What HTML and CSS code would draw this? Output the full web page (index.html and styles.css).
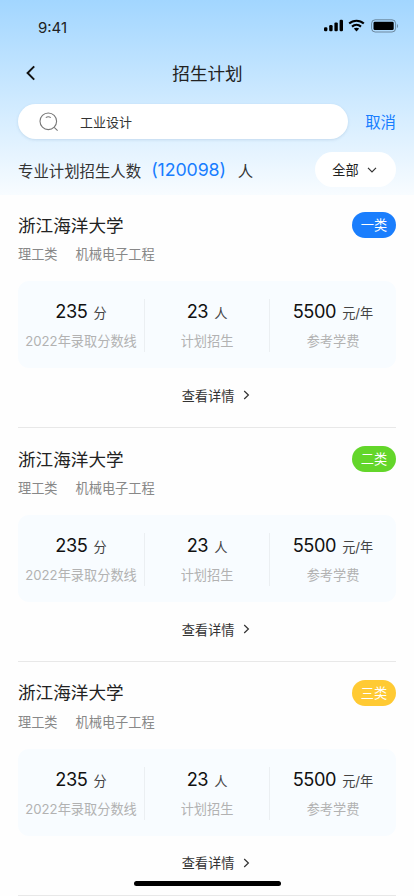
FILE: index.html
```html
<!DOCTYPE html>
<html lang="zh-CN">
<head>
  <meta charset="UTF-8">
  <meta name="viewport" content="width=device-width, initial-scale=1.0">
  <title>招生计划</title>
  <link rel="stylesheet" href="styles.css">
</head>
<body>

<div class="top">
  <!-- 状态栏 -->
  <div class="status">
    <span class="time">9:41</span>
    <div class="status-icons">
      <svg width="20" height="14" viewBox="0 0 20 14">
        <rect x="0" y="8.2" width="3.4" height="4" rx="1.2"/>
        <rect x="5.2" y="6" width="3.4" height="6.2" rx="1.2"/>
        <rect x="10.4" y="3.4" width="3.4" height="8.8" rx="1.2"/>
        <rect x="15.6" y="0.8" width="3.4" height="11.4" rx="1.2"/>
      </svg>
      <svg class="wifi" width="17" height="14" viewBox="0 0 17 14">
        <path d="M1.2 4.6C5.2.8 11.8.8 15.8 4.6M4 7.6c2.6-2.3 6.4-2.3 9 0" fill="none" stroke="#000" stroke-width="2.1"/>
        <path d="M5.8 9.6c1.6-1.2 3.8-1.2 5.4 0L8.5 12.4z"/>
      </svg>
      <svg class="battery" width="28" height="14" viewBox="0 0 28 14">
        <rect x="0.6" y="0.8" width="24" height="12.2" rx="3.6" fill="none" stroke="#000" stroke-opacity=".38"/>
        <rect x="2.5" y="2.7" width="20.2" height="8.4" rx="1.4"/>
        <path d="M26 5v4c1.3-.6 1.3-3.4 0-4z" fill-opacity=".4"/>
      </svg>
    </div>
  </div>
  <!-- 标题 -->
  <div class="nav">
    <svg class="back" width="10" height="16" viewBox="0 0 10 16">
      <path d="M8.2 1.4L1.6 8l6.6 6.6"/>
    </svg>
    <h1>招生计划</h1>
  </div>
  <!-- 搜索 -->
  <div class="search">
    <div class="search-box">
      <svg width="20" height="20" viewBox="0 0 20 20">
        <circle cx="9.3" cy="9.3" r="8.3"/>
        <path d="M15.2 15.4l3.4 3.2M6.8 5.6c1.4-1 3.6-1 5 0"/>
      </svg>
      <span>工业设计</span>
    </div>
    <a class="cancel" href="javascript:;">取消</a>
  </div>
  <div class="total">
    <span>专业计划招生人数</span>
    <span class="total-num">(120098)</span>
    <span>人</span>
    <div class="filter">全部
      <svg width="10" height="6" viewBox="0 0 10 6"><path d="M1 .8l4 4 4-4"/></svg>
    </div>
  </div>
</div>

<div class="list">
  <div class="item">
    <div class="item-head">
      <h2>浙江海洋大学</h2>
      <span class="tag tag-blue">一类</span>
    </div>
    <div class="item-type"><span>理工类</span><span>机械电子工程</span></div>
    <div class="data">
      <div class="data-col"><p><b>235</b>分</p><span>2022年录取分数线</span></div>
      <div class="data-col"><p><b>23</b>人</p><span>计划招生</span></div>
      <div class="data-col"><p><b>5500</b>元/年</p><span>参考学费</span></div>
    </div>
    <a class="more" href="javascript:;">查看详情
      <svg width="7" height="10" viewBox="0 0 7 10"><path d="M1.2 1l4.2 4-4.2 4"/></svg>
    </a>
  </div>
  <div class="item">
    <div class="item-head">
      <h2>浙江海洋大学</h2>
      <span class="tag tag-green">二类</span>
    </div>
    <div class="item-type"><span>理工类</span><span>机械电子工程</span></div>
    <div class="data">
      <div class="data-col"><p><b>235</b>分</p><span>2022年录取分数线</span></div>
      <div class="data-col"><p><b>23</b>人</p><span>计划招生</span></div>
      <div class="data-col"><p><b>5500</b>元/年</p><span>参考学费</span></div>
    </div>
    <a class="more" href="javascript:;">查看详情
      <svg width="7" height="10" viewBox="0 0 7 10"><path d="M1.2 1l4.2 4-4.2 4"/></svg>
    </a>
  </div>
  <div class="item">
    <div class="item-head">
      <h2>浙江海洋大学</h2>
      <span class="tag tag-yellow">三类</span>
    </div>
    <div class="item-type"><span>理工类</span><span>机械电子工程</span></div>
    <div class="data">
      <div class="data-col"><p><b>235</b>分</p><span>2022年录取分数线</span></div>
      <div class="data-col"><p><b>23</b>人</p><span>计划招生</span></div>
      <div class="data-col"><p><b>5500</b>元/年</p><span>参考学费</span></div>
    </div>
    <a class="more" href="javascript:;">查看详情
      <svg width="7" height="10" viewBox="0 0 7 10"><path d="M1.2 1l4.2 4-4.2 4"/></svg>
    </a>
  </div>
</div>

<!-- 底部横条 -->
<div class="home-bar"></div>

</body>
</html>
```
FILE: styles.css
```css
* {
  margin: 0;
  padding: 0;
  box-sizing: border-box;
}

body {
  height: 896px;
  overflow: hidden;
  background: #fefefe;
  color: #333;
  font-family: Inter, "Noto Sans CJK SC", sans-serif;
}

a {
  text-decoration: none;
}

svg {
  display: block;
  flex: none;
}

.top {
  height: 195px;
  padding: 0 18px;
  background: linear-gradient(#a2d6ff, #f8fcff);
}

.status {
  display: flex;
  justify-content: space-between;
  height: 52px;
  padding: 18px 0 0 20px;
}

.time {
  font-size: 15px;
  line-height: 20px;
  color: #222;
}

.status-icons {
  display: flex;
  margin-right: -3px;
}

.status-icons svg {
  margin-top: 1px;
}

.status-icons .wifi {
  margin-left: 4px;
}

.status-icons .battery {
  margin-left: 6px;
}

.nav {
  display: grid;
  grid-template-columns: 26px 1fr 26px;
  align-items: center;
  height: 42px;
}

.back {
  margin-left: 8px;
}

.back path {
  fill: none;
  stroke: #111;
  stroke-width: 2;
}

.nav h1 {
  padding: 0 0 2px 1px;
  text-align: center;
  font-size: 17.6px;
  font-weight: 400;
  color: #222;
}

.search {
  display: flex;
  align-items: center;
  justify-content: space-between;
  margin-top: 10px;
}

.search-box {
  display: flex;
  align-items: center;
  width: 330px;
  height: 35px;
  padding-left: 21px;
  border-radius: 18px;
  background: #fff;
  font-size: 13px;
  box-shadow: 0 1px 3px rgba(80, 130, 170, .2);
}

.search-box svg {
  margin-right: 21px;
  fill: none;
  stroke: #777;
  stroke-width: 1.1;
}

.cancel {
  padding-bottom: 2px;
  font-size: 15.4px;
  color: #177dff;
}

.total {
  display: flex;
  align-items: center;
  height: 35px;
  margin-top: 13px;
  font-size: 15.4px;
}

.total-num {
  margin: 0 12px 0 10px;
  font-size: 17.8px;
  letter-spacing: -.1px;
  color: #177dff;
}

.filter {
  display: flex;
  align-items: center;
  justify-content: center;
  gap: 8px;
  width: 81px;
  height: 35px;
  padding-right: 2px;
  margin-left: auto;
  border-radius: 18px;
  background: #fff;
  font-size: 13.2px;
  color: #222;
}

.filter path,
.more path {
  fill: none;
  stroke: #333;
  stroke-width: 1.2;
}

.list {
  padding: 0 18px;
}

.item {
  height: 233.8px;
  padding-top: 18px;
  border-bottom: 1px solid #e8e8e8;
}

.item:first-child {
  height: 233px;
  padding-top: 17px;
}

.item-head {
  display: flex;
  align-items: center;
  justify-content: space-between;
  height: 26px;
}

.item-head h2 {
  padding-bottom: 2px;
  font-size: 17.6px;
  font-weight: 400;
  color: #222;
}

.tag {
  width: 44px;
  height: 26px;
  border-radius: 13px;
  line-height: 26px;
  text-align: center;
  font-size: 13.2px;
  color: #fff;
}

.tag-blue {
  background: #1a7efd;
}

.tag-green {
  background: #63d62a;
}

.tag-yellow {
  background: #ffca33;
}

.item-type {
  display: flex;
  gap: 18px;
  margin-top: 6px;
  line-height: 20px;
  font-size: 13.2px;
  color: #888;
}

.data {
  display: grid;
  grid-template-columns: 126px 125px 1fr;
  height: 87px;
  margin-top: 17px;
  padding: 18px 0 16px;
  border-radius: 11px;
  background: #f8fcff;
}

.data-col {
  text-align: center;
  font-size: 13.2px;
  color: #b2b2b2;
  white-space: nowrap;
}

.data-col + .data-col {
  border-left: 1px solid #ebeff2;
}

.data-col p {
  height: 24px;
  line-height: 24px;
  color: #444;
}

.data-col b {
  margin-right: 6px;
  font-size: 18.2px;
  font-weight: 400;
  letter-spacing: -.4px;
  color: #111;
}

.data-col span {
  display: block;
  margin-top: 8px;
  line-height: 20px;
}

.more {
  display: flex;
  align-items: center;
  justify-content: center;
  gap: 9px;
  height: 20px;
  padding-left: 18px;
  margin-top: 17px;
  font-size: 13.2px;
  color: #333;
}

/* 浮在列表上方 */
.home-bar {
  position: fixed;
  left: 134px;
  bottom: 10px;
  width: 147px;
  height: 5px;
  border-radius: 3px;
  background: #000;
}
```
